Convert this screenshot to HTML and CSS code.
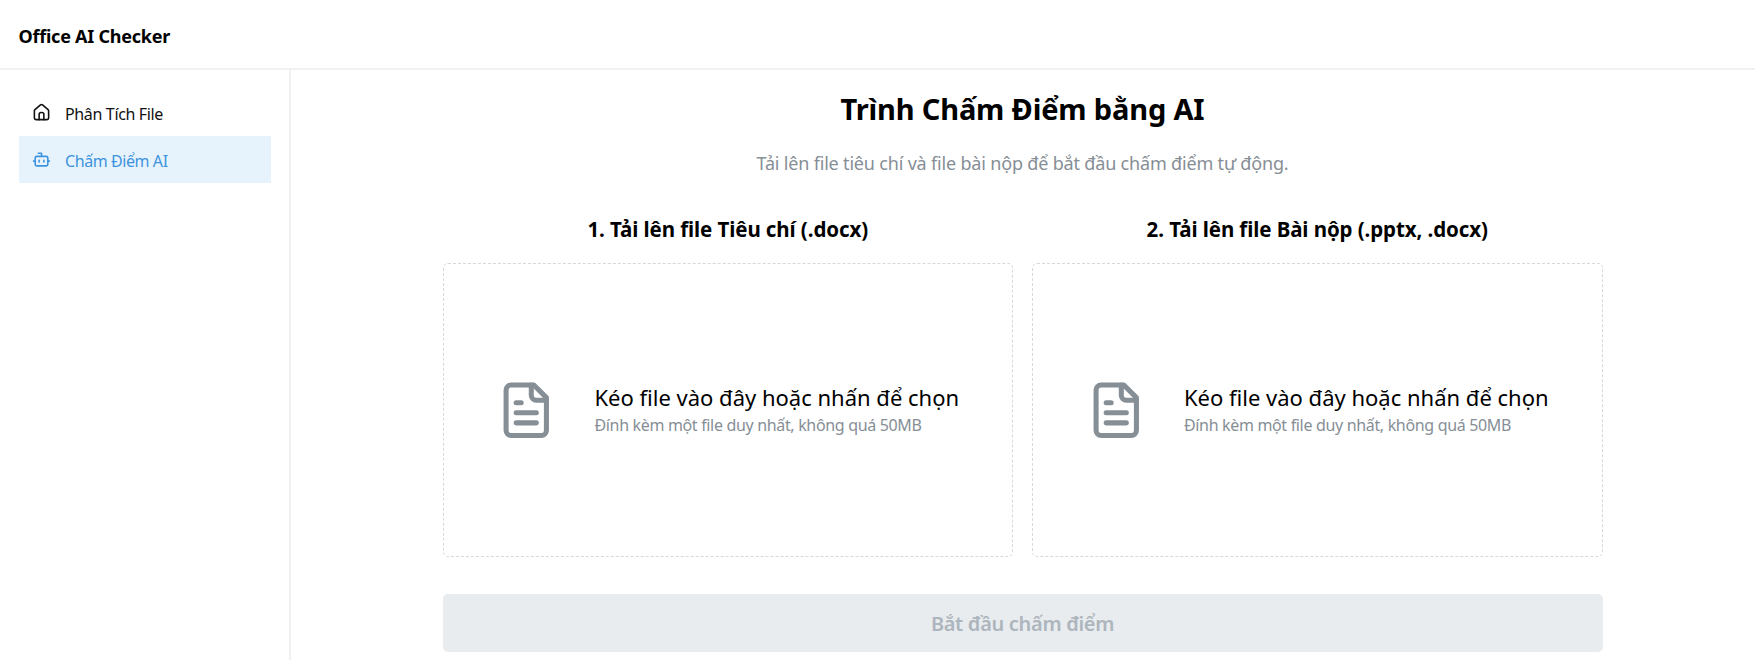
FILE: index.html
```html
<!DOCTYPE html>
<html lang="vi">
<head>
<meta charset="utf-8">
<title>Office AI Checker</title>
<link rel="stylesheet" href="styles.css">
</head>
<body>
<header class="header"><span class="brand">Office AI Checker</span></header>
<div class="shell">
  <nav class="sidebar">
    <a class="nav-link">
      <svg class="nav-icon" viewBox="0 0 24 24"><path d="M15 21v-6.500a2.500 2.500 0 0 0-2.500-2.500h-1a2.500 2.500 0 0 0-2.500 2.500V21"/><path d="M3 10a2 2 0 0 1 .709-1.528l7-5.999a2 2 0 0 1 2.582 0l7 5.999A2 2 0 0 1 21 10v9a2 2 0 0 1-2 2H5a2 2 0 0 1-2-2z"/></svg>
      <span class="nav-label">Phân Tích File</span>
    </a>
    <a class="nav-link active">
      <svg class="nav-icon" viewBox="0 0 24 24"><path d="M12 8V4H8"/><rect width="16" height="12" x="4" y="8" rx="2"/><path d="M2 14h2M20 14h2M15 13v2M9 13v2"/></svg>
      <span class="nav-label">Chấm Điểm AI</span>
    </a>
  </nav>
  <main class="main">
    <div class="container">
      <h1 class="title">Trình Chấm Điểm bằng AI</h1>
      <p class="subtitle">Tải lên file tiêu chí và file bài nộp để bắt đầu chấm điểm tự động.</p>
      <div class="grid">
        <section class="column">
          <h2 class="step">1. Tải lên file Tiêu chí (.docx)</h2>
          <div class="dropzone">
            <svg class="file-icon" viewBox="0 0 24 24"><path d="M15 2H6a2 2 0 0 0-2 2v16a2 2 0 0 0 2 2h12a2 2 0 0 0 2-2V7Z"/><path d="M14 2v4a2 2 0 0 0 2 2h4"/><path d="M10 9H8M16 13H8M16 17H8"/></svg>
            <div class="drop-text"><span class="drop-title">Kéo file vào đây hoặc nhấn để chọn</span><span class="drop-note">Đính kèm một file duy nhất, không quá 50MB</span></div>
          </div>
        </section>
        <section class="column">
          <h2 class="step">2. Tải lên file Bài nộp (.pptx, .docx)</h2>
          <div class="dropzone">
            <svg class="file-icon" viewBox="0 0 24 24"><path d="M15 2H6a2 2 0 0 0-2 2v16a2 2 0 0 0 2 2h12a2 2 0 0 0 2-2V7Z"/><path d="M14 2v4a2 2 0 0 0 2 2h4"/><path d="M10 9H8M16 13H8M16 17H8"/></svg>
            <div class="drop-text"><span class="drop-title">Kéo file vào đây hoặc nhấn để chọn</span><span class="drop-note">Đính kèm một file duy nhất, không quá 50MB</span></div>
          </div>
        </section>
      </div>
      <button class="submit" disabled>Bắt đầu chấm điểm</button>
    </div>
  </main>
</div>
</body>
</html>
```
FILE: styles.css
```css
* { box-sizing: border-box; }
body { margin: 0; height: 660px; overflow: hidden; display: flex; flex-direction: column; background: #fff; color: #000; font-family: "Segoe UI", "Noto Sans", sans-serif; }
.header { flex: none; height: 70px; padding: 22px 18px 0 18.5px; border-bottom: 2px solid #eff1f3; }
.brand { display: block; font-size: 18px; line-height: 28px; font-weight: 700; letter-spacing: -0.24px; }
.shell { flex: 1; display: flex; min-height: 0; }
.sidebar { width: 291px; flex: none; padding: 19px 18px 0 19px; border-right: 2px solid #eff1f3; }
.nav-link { display: flex; align-items: center; height: 47px; padding: 0 13px; gap: 14px; color: #111; }
.nav-link.active { background: #e7f3fc; color: #3d93dd; }
.nav-icon { width: 19px; height: 19px; fill: none; stroke: currentColor; stroke-width: 2; stroke-linecap: round; stroke-linejoin: round; }
.nav-label { font-size: 16px; line-height: 24px; padding-top: 2px; letter-spacing: -0.35px; white-space: nowrap; }
.active .nav-label { letter-spacing: -0.42px; }
.main { flex: 1; padding: 18px 0 0; display: flex; justify-content: center; }
.container { width: 1160px; margin-left: -1px; }
.title { margin: 0; font-size: 29px; line-height: 42px; text-align: center; font-weight: 700; letter-spacing: -0.16px; }
.subtitle { margin: 19px 0 0; font-size: 18px; line-height: 28px; text-align: center; color: #868e96; letter-spacing: -0.18px; }
.grid { display: grid; grid-template-columns: 1fr 1fr; gap: 19px; margin-top: 37px; }
.step { margin: 0 0 19px; font-size: 20.5px; line-height: 30px; text-align: center; font-weight: 700; letter-spacing: -0.09px; }
.dropzone { height: 294px; border: 1px dashed #d5d9dd; border-radius: 5px; display: flex; align-items: center; justify-content: center; gap: 37.5px; }
.file-icon { width: 60.5px; height: 60.5px; fill: none; stroke: #868e96; stroke-width: 2; stroke-linecap: round; stroke-linejoin: round; }
.drop-text { display: flex; flex-direction: column; white-space: nowrap; }
.drop-title { font-size: 22px; line-height: 29px; }
.drop-note { font-size: 16px; line-height: 26px; color: #868e96; letter-spacing: -0.33px; }
.submit { display: block; width: 100%; height: 58px; margin-top: 37px; padding: 1px 0 0; border: 0; border-radius: 5px; background: #e8ecef; color: #adb5bd; font: 600 20px/57px "Segoe UI", "Noto Sans", sans-serif; letter-spacing: -0.32px; }
```
